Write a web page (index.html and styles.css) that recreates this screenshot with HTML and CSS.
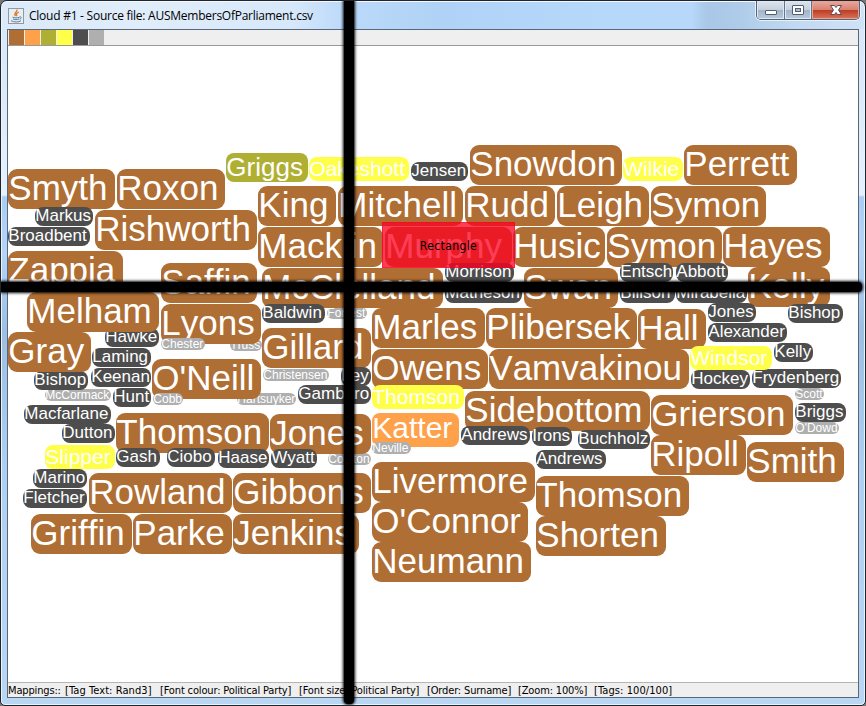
FILE: index.html
```html
<!DOCTYPE html>
<html lang="en">
<head>
<meta charset="utf-8">
<title>Cloud #1 - Source file: AUSMembersOfParliament.csv</title>
<link rel="stylesheet" href="styles.css">
</head>
<body>
<div class="window">
  <header class="titlebar">
    <svg class="app-icon" viewBox="0 0 16 16">
      <rect x=".5" y=".5" width="15" height="15" fill="#e9eef2" stroke="#8e9aa4"/>
      <path d="M8.8 1.500C10 4 5 5 7.400 8.200M10.800 4C8 5.500 8 6.300 9 8.300" fill="none" stroke="#e2762b" stroke-width="1.300"/>
      <path d="M4.500 9.200c2 1 5 1 7 0M5 11c2 .9 4 .9 6 0M3 12.700c3 1.800 8 1.600 10 0M11.500 9c2.500-.6 2.300 1.700 0 2.300" fill="none" stroke="#567f9e" stroke-width="1"/>
    </svg>
    <h1 class="title">Cloud #1 - Source file: AUSMembersOfParliament.csv</h1>
    <div class="controls">
      <span class="control minimise"><svg viewBox="0 0 14 12"><rect x="1.500" y="6.500" width="11" height="4" rx=".5" fill="#fff" stroke="#555d70"/></svg></span>
      <span class="control maximise"><svg viewBox="0 0 14 12"><rect x="1.500" y="1.500" width="11" height="9" rx=".5" fill="#fff" stroke="#555d70"/><rect x="4.500" y="4.500" width="5" height="3" fill="#a9bdd2" stroke="#555d70"/></svg></span>
      <span class="control close"><svg viewBox="0 0 14 12"><path d="M1.500 1.500h4L7 3.500l1.500-2h4L9.500 6l3 4.500h-4L7 8.500l-1.500 2h-4L4.500 6z" fill="#fff" stroke="#5c4a58"/></svg></span>
    </div>
  </header>
  <main class="client">
    <div class="toolbar">
      <i class="swatch labor"></i><i class="swatch katter"></i><i class="swatch country"></i><i class="swatch independent"></i><i class="swatch liberal"></i><i class="swatch national"></i>
    </div>
    <svg class="cloud" id="cloud" viewBox="8 46 850 636"></svg>
    <footer class="status">
      <span>Mappings::</span><span class="loose">[Tag Text: Rand3]</span><span>[Font colour: Political Party]</span><span>[Font size: Political Party]</span><span>[Order: Surname]</span><span>[Zoom: 100%]</span><span class="loose">[Tags: 100/100]</span>
    </footer>
  </main>
  <div class="rectangle">Rectangle</div>
  <div class="bar bar-h"></div>
  <div class="bar bar-v"></div>
</div>
<script src="cloud.js"></script>
</body>
</html>
```
FILE: styles.css
```css
* { box-sizing: border-box; }
body { margin: 0; background: #777; overflow: hidden; }
.window {
  position: relative;
  width: 866px;
  height: 706px;
  padding: 0 7px 7px 7px;
  display: flex;
  flex-direction: column;
  overflow: hidden;
  border: 1px solid #20242c;
  border-radius: 7px 7px 5px 5px;
  box-shadow: inset 0 0 0 1px #e8f4ff;
  background: linear-gradient(180deg, #d8e7f8 0, #dcebfa 100px, #e6f1fc 194px, #abcdf3 196px, #b5d5f7 250px, #9dbfe2 330px, #aed0f2 480px, #b9d7f3 100%);
  font-family: "Liberation Sans", sans-serif;
}
.titlebar {
  flex: 0 0 28px;
  margin: 0 -6px;
  padding-left: 6px;
  display: flex;
  align-items: center;
  border-top: 1px solid #f3f9ff;
  border-radius: 6px 6px 0 0;
  background: linear-gradient(90deg, #dbe9f8 0, #e0edfa 140px, #d7e8fa 290px, #bcdafa 340px, #afd2f6 440px, #b6d8fb 600px, #b7d8fa 690px, #a9c7e6 705px, #afcdea 740px, #c4daf2 800px, #cfe2f6 100%);
}
.app-icon { width: 16px; height: 16px; margin-right: 5px; }
.title {
  margin: 0;
  font: 12px "Open Sans", "Noto Sans", sans-serif;
  letter-spacing: -.25px;
  color: #000;
  white-space: nowrap;
}
.controls {
  margin-left: auto;
  margin-right: 4px;
  align-self: flex-start;
  display: flex;
  height: 19px;
  width: 104px;
  margin-top: -1px;
  border: 1px solid #566276;
  border-top: 0;
  border-radius: 0 0 5px 5px;
  box-shadow: 0 0 0 1px #e6f1fb;
  overflow: hidden;
}
.control {
  flex: 0 0 28px;
  display: flex;
  align-items: center;
  justify-content: center;
  border-right: 1px solid #66748a;
  box-shadow: inset 0 0 0 1px #e0e9f3;
  background: linear-gradient(#dce5ef 0, #c5d1df 48%, #a2b3c7 50%, #b8cadd 100%);
}
.control svg { width: 14px; height: 12px; }
.maximise { flex-basis: 27px; }
.close { flex: 1; border: 0; box-shadow: inset 0 0 0 1px #e8a394; background: linear-gradient(#e9a99c 0, #d68271 48%, #bd3a22 50%, #d9765c 100%); }
.client {
  flex: 1;
  display: flex;
  flex-direction: column;
  margin-left: -1px;
  border: 1px solid #59677a;
  width: 852px;
  background: #fff;
}
.toolbar {
  flex: 0 0 16px;
  display: flex;
  gap: 1px;
  padding-left: 1px;
  background: #efefef;
  border-bottom: 1px solid #999;
}
.swatch { width: 15px; height: 15px; }
.labor { background: #af6e33; }
.katter { background: #ffa04a; }
.country { background: #afaf33; }
.independent { background: #ffff4a; }
.liberal { background: #4d4d4d; }
.national { background: #afafaf; }
.cloud { flex: 0 0 636px; width: 850px; }
.cloud text { fill: #fff; font-kerning: none; }
.tag-labor { fill: #af6e33; }
.tag-katter { fill: #ffa04a; }
.tag-country { fill: #afaf33; }
.tag-independent { fill: #ffff4a; }
.tag-liberal { fill: #4d4d4d; }
.tag-national { fill: #afafaf; }
.status {
  flex: 1;
  display: grid;
  grid-template-columns: 57px 95px 139px 128px 91px 76px 90px;
  align-items: center;
  border-top: 1px solid #b5b5b5;
  background: #efefef;
  color: #000;
  font: 11px "DejaVu Sans Condensed", sans-serif;
  letter-spacing: -.15px;
  white-space: nowrap;
}
.status .loose { letter-spacing: .08px; }
.rectangle {
  position: absolute;
  left: 381px;
  top: 221px;
  width: 133px;
  height: 46px;
  display: flex;
  align-items: center;
  justify-content: center;
  padding-top: 1px;
  border: 1px solid rgba(255, 0, 38, .45);
  background: rgba(252, 0, 32, .755);
  color: #000;
  font: 12px "DejaVu Sans Condensed", sans-serif;
  letter-spacing: .4px;
}
.bar { position: absolute; background: #000; box-shadow: 0 0 3px 1px #000; }
.bar-h { left: -3px; top: 281px; width: 864px; height: 10px; border-radius: 4px; }
.bar-v { left: 343px; top: -4px; width: 10px; height: 707px; border-radius: 4px; }
```
FILE: cloud.js
```js
// Per party: [box height, corner radius, font size, baseline offset]
const styles = {
  labor: [40, 9, 35, 31],
  katter: [34, 8, 30, 25],
  country: [29, 8, 26, 23],
  independent: [24, 8, 21, 19],
  liberal: [19, 8, 17, 14],
  national: [12, 6, 12, 9.5]
};

// Each tag: name, left, top, right
const groups = [
  ["national", [
    ["Forrest", 327, 307, 367], ["Truss", 230, 339, 262],
    ["Christensen", 263, 369, 329], ["Hartsuyker", 237, 393, 296], ["McCormack", 45, 389, 111],
    ["Coulton", 328, 453, 371],
    ["Scott", 795, 388, 824], ["O'Dowd", 795, 422, 839]]],
  ["liberal", [["Hawke", 105, 328, 159], ["Bishop", 34, 371, 88]]],
  ["labor", [
    ["Smyth", 8, 169, 115], ["Roxon", 117, 169, 225], ["Rishworth", 95, 210, 257],
    ["Zappia", 8, 251, 123], ["King", 258, 186, 336], ["Mitchell", 338, 186, 463],
    ["Rudd", 465, 186, 555], ["Leigh", 557, 186, 649], ["Symon", 651, 186, 766],
    ["Snowdon", 470, 145, 622], ["Perrett", 684, 145, 797], ["Macklin", 258, 227, 383],
    ["Murphy", 385, 227, 512], ["Husic", 513, 227, 605], ["Symon", 607, 227, 722],
    ["Hayes", 723, 227, 830], ["McClelland", 262, 268, 443], ["Swan", 524, 268, 618],
    ["Kelly", 748, 267, 830], ["Saffin", 161, 263, 257], ["Melham", 27, 292, 159],
    ["Lyons", 161, 304, 261], ["Gray", 8, 332, 91], ["Gillard", 262, 328, 371],
    ["O'Neill", 152, 359, 261], ["Thomson", 116, 413, 269], ["Jones", 270, 414, 371],
    ["Rowland", 89, 473, 232], ["Gibbons", 233, 473, 371], ["Griffin", 31, 514, 132],
    ["Parke", 133, 514, 232], ["Jenkins", 233, 514, 359], ["Marles", 372, 308, 485],
    ["Plibersek", 486, 308, 637], ["Hall", 638, 309, 706], ["Owens", 372, 349, 488],
    ["Vamvakinou", 489, 349, 689], ["Sidebottom", 465, 391, 650], ["Grierson", 651, 395, 793],
    ["Ripoll", 651, 435, 746], ["Smith", 747, 442, 844], ["Livermore", 372, 462, 535],
    ["O'Connor", 372, 502, 528], ["Neumann", 372, 542, 531], ["Thomson", 536, 476, 689],
    ["Shorten", 536, 516, 666]]],
  ["liberal", [
    ["Markus", 35, 207, 93], ["Broadbent", 8, 227, 90], ["Jensen", 411, 162, 468],
    ["Morrison", 445, 263, 514], ["Matheson", 445, 284, 522], ["Entsch", 620, 263, 673],
    ["Abbott", 676, 263, 728], ["Billson", 620, 284, 675], ["Mirabella", 676, 284, 747],
    ["Baldwin", 262, 304, 325], ["Jones", 708, 303, 756], ["Alexander", 708, 323, 787],
    ["Bishop", 788, 304, 843], ["Kelly", 774, 343, 813], ["Hockey", 691, 370, 750],
    ["Frydenberg", 752, 369, 841], ["Briggs", 795, 403, 846], ["Laming", 92, 348, 151],
    ["Keenan", 91, 368, 151], ["Hunt", 113, 388, 151], ["Macfarlane", 24, 405, 111],
    ["Dutton", 62, 424, 115], ["Gash", 116, 448, 160], ["Ciobo", 167, 448, 215],
    ["Haase", 218, 449, 269], ["Wyatt", 271, 449, 317], ["Marino", 33, 469, 87],
    ["Fletcher", 23, 489, 87], ["Ley", 341, 367, 371], ["Gambaro", 298, 385, 371],
    ["Andrews", 461, 426, 530], ["Irons", 532, 427, 572], ["Buchholz", 578, 430, 650],
    ["Andrews", 536, 450, 606]]],
  ["country", [["Griggs", 226, 153, 308]]],
  ["katter", [["Katter", 372, 413, 459]]],
  ["independent", [
    ["Oakeshott", 309, 157, 409], ["Wilkie", 623, 157, 683], ["Windsor", 690, 346, 772],
    ["Thomson", 372, 385, 464], ["Slipper", 45, 445, 115]]],
  ["national", [["Chester", 161, 338, 205], ["Cobb", 153, 393, 183], ["Neville", 372, 442, 411]]]
];

const cloud = document.getElementById("cloud");
function add(name, attributes, content) {
  const node = document.createElementNS("http://www.w3.org/2000/svg", name);
  for (const key in attributes) node.setAttribute(key, attributes[key]);
  if (content) node.textContent = content;
  cloud.appendChild(node);
}
for (const [party, tags] of groups) {
  const [height, radius, size, baseline] = styles[party];
  for (const [label, left, top, right] of tags) {
    add("rect", { x: left, y: top, width: right - left, height, rx: radius, class: "tag-" + party });
    add("text", { x: left + 0.3, y: top + baseline, "font-size": size }, label);
  }
}
```
